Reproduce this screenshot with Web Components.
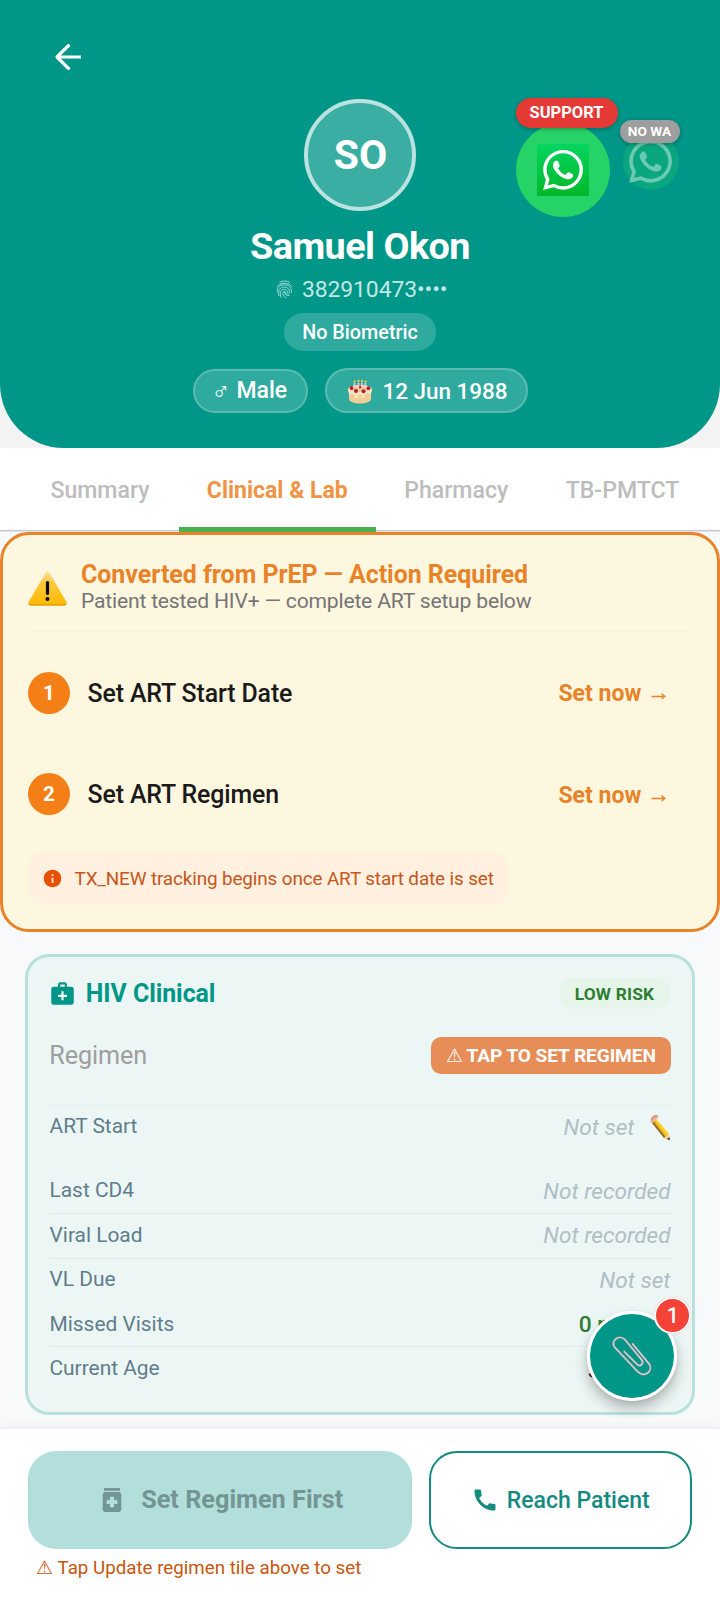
<!DOCTYPE html>
<html lang="en">
<head>
<meta charset="utf-8">
<title>Patient profile</title>
<style>
html,body{margin:0;padding:0}
body{width:720px;height:1600px;overflow:hidden;font-family:Roboto,"Noto Sans",sans-serif;background:#f7f9fb}
</style>
</head>
<body>
<patient-screen></patient-screen>
<script>
const define = (name, html) => {
  const template = document.createElement('template');
  template.innerHTML = html;
  customElements.define(name, class extends HTMLElement {
    constructor() {
      super();
      this.attachShadow({ mode: 'open' }).append(template.content.cloneNode(true));
    }
  });
};

const CLIP = 'M12.500 16.500 26.200 30c2.400 2.300 7-1.200 4.500-4.600L13.500 4.500C8.500-1.300-2 4.500 2.500 11.800L26.500 37.200c7 6.500 16-.8 11.800-7.800L21 8.500';
const ICONS = {
  back: ['0 0 26 26', '<path d="M13.6 1.4 2 13l11.600 11.600M2.500 13H26" fill="none" stroke="currentColor" stroke-width="3.200" stroke-linejoin="round"/><circle cx="13.600" cy="1.700" r="1.600" fill="currentColor"/><circle cx="13.600" cy="24.300" r="1.600" fill="currentColor"/>'],
  whatsapp: ['0 0 24 24', '<path fill="currentColor" d="M17.472 14.382c-.297-.149-1.758-.867-2.03-.967-.273-.099-.471-.148-.67.15-.197.297-.767.966-.94 1.164-.173.199-.347.223-.644.075-.297-.15-1.255-.463-2.39-1.475-.883-.788-1.48-1.761-1.653-2.059-.173-.297-.018-.458.13-.606.134-.133.298-.347.446-.52.149-.174.198-.298.298-.497.099-.198.05-.371-.025-.52-.075-.149-.669-1.612-.916-2.207-.242-.579-.487-.5-.669-.51-.173-.008-.371-.01-.57-.01-.198 0-.52.074-.792.372-.272.297-1.04 1.016-1.04 2.479 0 1.462 1.065 2.875 1.213 3.074.149.198 2.096 3.2 5.077 4.487.709.306 1.262.489 1.694.625.712.227 1.36.195 1.871.118.571-.085 1.758-.719 2.006-1.413.248-.694.248-1.289.173-1.413-.074-.124-.272-.198-.57-.347m-5.421 7.403h-.004a9.87 9.87 0 01-5.031-1.378l-.361-.214-3.741.982.998-3.648-.235-.374a9.86 9.86 0 01-1.51-5.26c.001-5.45 4.436-9.884 9.888-9.884 2.64 0 5.122 1.03 6.988 2.898a9.825 9.825 0 012.893 6.994c-.003 5.45-4.437 9.884-9.885 9.884m8.413-18.297A11.815 11.815 0 0012.05 0C5.495 0 .16 5.335.157 11.892c0 2.096.547 4.142 1.588 5.945L.057 24l6.305-1.654a11.882 11.882 0 005.683 1.448h.005c6.554 0 11.89-5.335 11.893-11.893a11.821 11.821 0 00-3.48-8.413z"/>'],
  fingerprint: ['0 0 18 20', '<g fill="none" stroke="currentColor" stroke-width=".85" stroke-linecap="round"><path d="M4 2.300C7 .5 11.500.5 14.300 2.300"/><path d="M1 7.200C3.800 2.300 13.800 2 17 7"/><path d="M1.500 12.500C.8 8 4 5 8.800 5c5 0 8 3.300 7.700 8"/><path d="M3 16.500C1.800 11 4.300 7.400 8.800 7.400c3.700 0 5.700 2.600 5.500 5.600-.1 2.400-3 2.600-3.700.6-.7-2-3.600-1.600-3.400.8.2 2 1.300 3.500 3.300 4.400"/><path d="M5.300 18.300C3.500 14 4.800 9.800 8.800 9.800c2 0 3.300 1.300 3.300 3"/><path d="M9 12.800c.3 2.500 2.300 4.300 5 3.800"/></g>'],
  cake: ['0 0 24 25', '<path d="M1 11h22v9c0 2.500-5 4.500-11 4.500S1 22.500 1 20z" fill="#efcd94"/><path d="M0 10.500C0 7.800 5 6 12 6s12 1.800 12 4.500c0 2.500-1 4.500-2.300 4.500-1.500 0-1.700-1.300-3-1.300-1.700 0-1.600 5.300-3.700 5.300-2 0-1.600-3.500-3.300-3.500-1.500 0-1.300 4-3.200 4-2 0-2-4.800-3.500-4.800-1.300 0-1.500.8-2.700.8C1 15.500 0 13 0 10.500z" fill="#f8e3c0"/><ellipse cx="12" cy="10" rx="9" ry="2.800" fill="#ecc99a"/><g fill="#b71c2b"><circle cx="3.500" cy="9" r="1.900"/><circle cx="8" cy="12" r="2"/><circle cx="15.500" cy="12.200" r="2"/><circle cx="20.500" cy="9.200" r="1.900"/><circle cx="12" cy="8" r="1.500"/></g><g stroke="#f4c7cf" stroke-width="1.500"><path d="M6.500 4v5M10.500 3.500v6M14 3.500v6M17.500 4v5"/></g><g fill="#ffd54f"><circle cx="6.500" cy="2.600" r="1.100"/><circle cx="10.500" cy="1.800" r="1.100"/><circle cx="14" cy="1.800" r="1.100"/><circle cx="17.500" cy="2.600" r="1.100"/></g>'],
  warning: ['0 0 39 35', '<defs><linearGradient id="g" x1="0" y1="0" x2="0" y2="1"><stop offset="0" stop-color="#fbe0a0"/><stop offset=".35" stop-color="#fcc83c"/><stop offset="1" stop-color="#fdb900"/></linearGradient></defs><path d="M17.900 1.200q1.600-2 3.200 0L38.500 31q1.200 3.400-2 3.600h-34Q-.7 34.400.5 31z" fill="url(#g)"/><path d="M.8 32.200q.3 2.200 2 2.400h33.500q2-.1 2.300-2.400-.9 1-2.300 1h-33q-1.600 0-2.500-1z" fill="#e09a00"/><path d="M19.500 11.500v11" stroke="#0b0b12" stroke-width="3.200" stroke-linecap="round"/><circle cx="19.500" cy="28" r="2" fill="#0b0b12"/>'],
  info: ['0 0 24 24', '<path fill="currentColor" d="M12 2C6.480 2 2 6.480 2 12s4.480 10 10 10 10-4.480 10-10S17.520 2 12 2zm1 15h-2v-6h2v6zm0-8h-2V7h2v2z"/>'],
  medical: ['0 0 24 24', '<path fill="currentColor" fill-rule="evenodd" d="M20 6h-4V4c0-1.100-.9-2-2-2h-4c-1.100 0-2 .9-2 2v2H4c-1.100 0-2 .9-2 2v12c0 1.100.9 2 2 2h16c1.100 0 2-.9 2-2V8c0-1.100-.9-2-2-2zM10 4h4v2h-4V4zm6 11h-3v3h-2v-3H8v-2h3v-3h2v3h3v2z"/>'],
  medication: ['0 0 24 24', '<path fill="currentColor" fill-rule="evenodd" d="M6 3h12v2H6zM17 6H7c-1.100 0-2 .9-2 2v11c0 1.100.9 2 2 2h10c1.100 0 2-.9 2-2V8c0-1.100-.9-2-2-2zm-1 9h-2.500v2.500h-3V15H8v-3h2.500V9.500h3V12H16v3z"/>'],
  call: ['0 0 24 24', '<path fill="currentColor" d="M20.010 15.380c-1.230 0-2.420-.2-3.530-.56-.35-.12-.74-.03-1.010.24l-1.570 1.970c-2.830-1.350-5.480-3.900-6.890-6.830l1.950-1.660c.27-.28.35-.67.24-1.020-.37-1.110-.56-2.300-.56-3.530 0-.54-.45-.99-.99-.99H4.190C3.650 3 3 3.240 3 3.990 3 13.280 10.730 21 20.010 21c.71 0 .99-.63.99-1.180v-3.450c0-.54-.45-.99-.99-.99z"/>'],
  pencil: ['0 0 21 27', '<path d="M4.500 3.700 18.700 20l1.400 6.300-6-2.300L.7 7.300z" fill="#e9ae12"/><path d="M6.300 4.900 19.200 20.300l-2.400 1.800L4.200 5.700z" fill="#ffd02e"/><path d="M.7 7.300 14 24l1.300-1L2.500 6.500z" fill="#8a6a34"/><path d="m18.700 20 1.400 6.300-6-2.300z" fill="#f3d7a4"/><path d="m19.400 23.200.7 3.100-3.300-1.200z" fill="#463c3a"/><path d="M.8 7.500C-.7 5.300 3.600-.3 7.200 1.200l1.500 2.200c-1.700.5-4.600 2.800-6.200 6z" fill="#dfb7a2"/><path d="M1 5.800C1.500 3 4.300.4 7.200 1.200l.6 1C5.300 2.500 2.800 4.600 1.800 7z" fill="#e38d83"/>'],
  clip: ['0 0 41 41', `<g fill="none" stroke-linecap="round" stroke-linejoin="round"><path stroke="#75898a" stroke-width="2.500" d="${CLIP}"/><path stroke="#cfd5d7" stroke-width="1.500" d="${CLIP}"/></g>`]
};
customElements.define('app-icon', class extends HTMLElement {
  constructor() {
    super();
    const [box, body] = ICONS[this.getAttribute('name')];
    this.attachShadow({ mode: 'open' }).innerHTML =
      `<style>:host{display:block;flex:none}svg{display:block;width:100%;height:100%;overflow:visible}</style><svg viewBox="${box}" aria-hidden="true">${body}</svg>`;
  }
});

define('info-pill', `<style>
:host{display:flex;align-items:center;box-sizing:border-box;height:44px;border:2px solid #5cbab1;border-radius:23px;background:#2eaa9e;color:#fff;font-size:23px;font-weight:500;line-height:28px;white-space:nowrap}
</style><slot></slot>`);

define('contact-badge', `<style>
:host{display:block;position:relative;width:var(--size);height:var(--size)}
.disc{width:100%;height:100%;border-radius:50%;background:var(--disc);display:flex;align-items:center;justify-content:center}
.tile{width:var(--tile);height:var(--tile);display:flex;align-items:center;justify-content:center;background:var(--tile-bg,none);color:var(--ink,#fff)}
app-icon{width:var(--logo);height:var(--logo)}
.tag{position:absolute;left:var(--tx);top:var(--ty);width:var(--tw);height:var(--th);border-radius:20px;background:var(--tag);color:#fff;font-weight:700;font-size:var(--tf);display:flex;align-items:center;justify-content:center;box-shadow:0 1px 4px rgba(0,0,0,.3);white-space:nowrap}
</style><div class="disc"><div class="tile"><app-icon name="whatsapp"></app-icon></div></div><div class="tag"><slot></slot></div>`);

define('patient-header', `<style>
:host{display:block;position:relative;background:#f3f3f3}
.panel{box-sizing:border-box;height:448px;padding-top:98.500px;background:#009688;border-radius:0 0 64px 64px;display:flex;flex-direction:column;align-items:center;color:#fff}
.back{position:absolute;left:54.500px;top:44.300px;width:26px;height:26px}
.avatar{box-sizing:border-box;width:112px;height:112px;flex:none;border:4px solid #b9e3df;border-radius:50%;background:#3aaea3;display:flex;align-items:center;justify-content:center;font-size:41px;font-weight:700;padding-left:1px}
.name{margin-top:13.500px;font-size:37.800px;letter-spacing:-.55px;line-height:44px;font-weight:700}
.id{margin-top:7.500px;display:flex;align-items:center;gap:9.500px;font-size:22.900px;line-height:28px;color:#c2e8e4;padding-left:3px}
.id app-icon{width:17px;height:19px}
.id span{letter-spacing:-.1px}
.bio{margin-top:9.500px;height:38px;box-sizing:border-box;width:152px;border-radius:19px;background:#2eaa9e;font-size:19.800px;font-weight:500;line-height:39px;display:flex;justify-content:center;white-space:nowrap}
.pills{margin-top:17px;display:flex;gap:17px;align-items:flex-end}
.sex{width:115px;padding:0 0 0 17px;box-sizing:border-box}
.sex i{font-style:normal;font-weight:400;font-size:25px;position:relative;top:1px;width:25px;display:inline-block}
.dob{width:203px;height:45px;padding:1px 0 0 21.500px;gap:10.500px;box-sizing:border-box;font-size:22.500px;letter-spacing:-.05px}
.dob app-icon{width:24px;height:25px}
.wa{position:absolute;left:515.500px;top:122.500px;--disc:#25d366;--size:94px;--tile:52px;--logo:40px;--tile-bg:linear-gradient(#05d560,#00b829);--tag:#e53935;--tx:0px;--ty:-25px;--tw:102px;--th:30.500px;--tf:16.500px}
.nowa{position:absolute;left:622.500px;top:133.500px;--disc:rgba(37,211,102,.27);--ink:rgba(255,255,255,.4);--size:56px;--tile:56px;--logo:43px;--tag:#9e9e9e;--tx:-3px;--ty:-14px;--tw:60px;--th:23px;--tf:13.700px}
</style>
<div class="panel">
  <app-icon class="back" name="back"></app-icon>
  <div class="avatar">SO</div>
  <div class="name">Samuel Okon</div>
  <div class="id"><app-icon name="fingerprint"></app-icon><span>382910473••••</span></div>
  <div class="bio">No Biometric</div>
  <div class="pills">
    <info-pill class="sex"><i>♂</i>Male</info-pill>
    <info-pill class="dob"><app-icon name="cake"></app-icon>12 Jun 1988</info-pill>
  </div>
</div>
<contact-badge class="wa">SUPPORT</contact-badge>
<contact-badge class="nowa">NO WA</contact-badge>`);

define('tab-item', `<style>
:host{display:flex;align-items:center;justify-content:center;box-sizing:border-box;height:84px;padding-top:5px;color:#bdbdbd;font-size:23.100px;font-weight:500;border-bottom:5px solid transparent;white-space:nowrap}
:host([active]){color:#ef9444;font-weight:700;font-size:23px;border-color:#4caf50}
</style><slot></slot>`);

define('tab-strip', `<style>
:host{display:grid;grid-template-columns:158px 196.500px 161.500px 171px;padding-left:21px;background:linear-gradient(#cbc5cf,#cbc5cf) 0 82px/100% 1.500px no-repeat #fff;height:84px}
</style><slot></slot>`);

define('setup-step', `<style>
:host{display:flex;align-items:center;height:101.300px}
.num{width:42px;height:42px;border-radius:50%;background:#f57f17;color:#fff;font-size:20.500px;font-weight:700;display:flex;align-items:center;justify-content:center}
.label{margin-left:17.500px;font-size:24.900px;letter-spacing:-.12px;font-weight:500;color:#1a1a1a;margin-top:1px}
.go{margin-left:auto;margin-right:22px;font-size:23px;font-weight:700;color:#e8832a;margin-top:2px;white-space:pre}
.go span{position:relative;top:-1px;-webkit-text-stroke:.5px #e8832a}
</style><div class="num"><slot name="num"></slot></div><div class="label"><slot></slot></div><div class="go">Set now <span>→</span></div>`);

define('action-card', `<style>
:host{display:block;box-sizing:border-box;height:400px;border:3px solid #e8832a;border-radius:29px;background:#fef7df;padding:25px 25px 0 25px}
.head{display:flex;align-items:center;height:72px;border-bottom:1px solid #fbf1da;gap:14px;margin-right:4px;box-sizing:border-box;padding-bottom:18px}
app-icon{width:39px;height:35px;margin-top:3px}
.t{font-size:24.900px;font-weight:700;line-height:29px;color:#e8832a}
.s{font-size:21.100px;letter-spacing:-.19px;line-height:24px;color:#757575}
.steps{padding-top:10.300px}
.note{display:flex;align-items:center;width:478px;box-sizing:border-box;height:52px;margin:7.700px 0 0 .5px;padding-left:13.500px;background:#fff0df;border-radius:12px;color:#c7561c;font-size:18.900px;letter-spacing:-.13px;gap:11.500px;white-space:nowrap}
.note app-icon{width:21px;height:21px;margin:0;color:#e65100}
</style>
<div class="head"><app-icon name="warning"></app-icon><div><div class="t">Converted from PrEP — Action Required</div><div class="s">Patient tested HIV+ — complete ART setup below</div></div></div>
<div class="steps"><setup-step><span slot="num">1</span>Set ART Start Date</setup-step><setup-step><span slot="num">2</span>Set ART Regimen</setup-step></div>
<div class="note"><app-icon name="info"></app-icon><span>TX_NEW tracking begins once ART start date is set</span></div>`);

define('data-row', `<style>
:host{display:flex;align-items:center;justify-content:space-between;height:44.400px;box-sizing:border-box;border-bottom:1px solid transparent;margin-right:-1px}
:host([line]){border-color:#e0ecec}
.l{font-size:20.900px;color:#607d8b;margin:0 0 2.500px 1px}
.v{font-size:22.600px;font-style:italic;color:#b0bec5;display:flex;align-items:center;margin-right:1.500px;padding-bottom:0}
:host([tone]) .v{font-style:normal;font-weight:500;font-size:22.700px;margin-right:1px}
:host([tone=good]) .v{color:#2e7d32}
:host([tone=plain]) .v{color:#212121;font-size:22.300px;margin-right:-1px;padding-top:1px}
</style><div class="l"><slot name="label"></slot></div><div class="v"><slot></slot></div>`);

define('clinical-card', `<style>
:host{display:block;box-sizing:border-box;height:461.500px;margin:21.500px 25px 0;border:3px solid #b8e1dd;border-radius:24px;background:#ecf6f5;padding:21.500px 21px 0 20.500px}
.head{display:flex;align-items:center;height:31px;color:#009688}
.head app-icon{width:27px;height:27px;margin-left:.8px}
.title{font-size:24.900px;letter-spacing:-.05px;font-weight:700;margin-left:9.500px}
.risk{margin:0 .5px 0 auto;width:112px;height:31px;border-radius:16px;background:#e6f5e9;color:#2e7d32;font-size:17.300px;letter-spacing:.2px;font-weight:700;display:flex;align-items:center;justify-content:center}
.reg{display:flex;align-items:center;justify-content:space-between;margin-top:27.500px;height:37.500px}
.reg span{font-size:25.200px;letter-spacing:-.1px;color:#9e9e9e;margin-left:.800px}
.cta{width:240.500px;height:37.500px;border-radius:10px;background:#e78d58;color:#fff;font-size:19.200px;letter-spacing:-.15px;font-weight:700;display:flex;align-items:center;justify-content:center;gap:4px;white-space:nowrap}
.cta i{font-style:normal;font-weight:400}
.list{border-top:1px solid #e2efee;margin-top:30.500px}
.first{margin-bottom:20px}
.first app-icon{width:21px;height:27px;margin:0 -.5px 0 15.500px}
</style>
<div class="head"><app-icon name="medical"></app-icon><div class="title">HIV Clinical</div><div class="risk">LOW RISK</div></div>
<div class="reg"><span>Regimen</span><div class="cta"><i>⚠</i>TAP TO SET REGIMEN</div></div>
<div class="list">
<data-row class="first"><span slot="label">ART Start</span>Not set<app-icon name="pencil"></app-icon></data-row>
<data-row line><span slot="label">Last CD4</span>Not recorded</data-row>
<data-row line><span slot="label">Viral Load</span>Not recorded</data-row>
<data-row><span slot="label">VL Due</span>Not set</data-row>
<data-row line tone="good"><span slot="label">Missed Visits</span>0 missed</data-row>
<data-row tone="plain"><span slot="label">Current Age</span>37 years</data-row>
</div>`);

define('attach-button', `<style>
:host{display:block;position:absolute;left:587.300px;top:1310.500px;width:90px;height:90px}
.disc{box-sizing:border-box;width:90px;height:90px;border-radius:50%;border:3px solid #fff;background:#fff;box-shadow:0 8px 14px rgba(0,0,0,.24),0 2px 5px rgba(0,0,0,.08)}
.fill{width:100%;height:100%;border-radius:50%;background:#009688;display:flex;align-items:center;justify-content:center}
app-icon{width:40px;height:41px}
.count{position:absolute;left:67px;top:-13.500px;box-sizing:border-box;width:37px;height:37px;border:2px solid #fff;border-radius:50%;background:#f44336;color:#fff;font-size:21.500px;font-weight:500;display:flex;align-items:center;justify-content:center;box-shadow:0 0 1px rgba(244,67,54,.6)}
</style><div class="disc"><div class="fill"><app-icon name="clip"></app-icon></div></div><div class="count">1</div>`);

define('action-bar', `<style>
:host{display:block;position:relative;box-sizing:border-box;height:171px;margin-top:auto;background:#fff;padding:22px 28px 0;box-shadow:0 -2px 8px rgba(0,0,0,.06)}
.row{display:flex;gap:17px;height:97.500px}
button{font-family:inherit;margin:0;border:0;padding:0;box-sizing:border-box;border-radius:28px;display:flex;align-items:center;white-space:nowrap}
.set{width:384px;padding-left:67.700px;gap:13.500px;background:#b2dfdb;color:#739593;font-size:25.260px;font-weight:700}
.set app-icon{width:32px;height:32px}
.call{width:263px;border:2px solid #158b7f;background:#fff;color:#158b7f;padding:1px 0 0 39.800px;gap:8px;font-size:23px;font-weight:500}
.call app-icon{width:28px;height:28px}
.warn{margin:6.500px 0 0 7.500px;display:flex;gap:5px;font-size:18.740px;line-height:26px;color:#c7560f}
</style>
<div class="row"><button class="set"><app-icon name="medication"></app-icon>Set Regimen First</button><button class="call"><app-icon name="call"></app-icon>Reach Patient</button></div>
<div class="warn"><span>⚠</span><span>Tap Update regimen tile above to set</span></div>`);

define('patient-screen', `<style>
:host{display:flex;flex-direction:column;position:relative;width:720px;height:1600px;overflow:hidden;background:#f7f9fb}
</style>
<patient-header></patient-header>
<tab-strip><tab-item>Summary</tab-item><tab-item active>Clinical &amp; Lab</tab-item><tab-item>Pharmacy</tab-item><tab-item>TB-PMTCT</tab-item></tab-strip>
<action-card></action-card>
<clinical-card></clinical-card>
<action-bar></action-bar>
<attach-button></attach-button>`);
</script>
</body>
</html>
